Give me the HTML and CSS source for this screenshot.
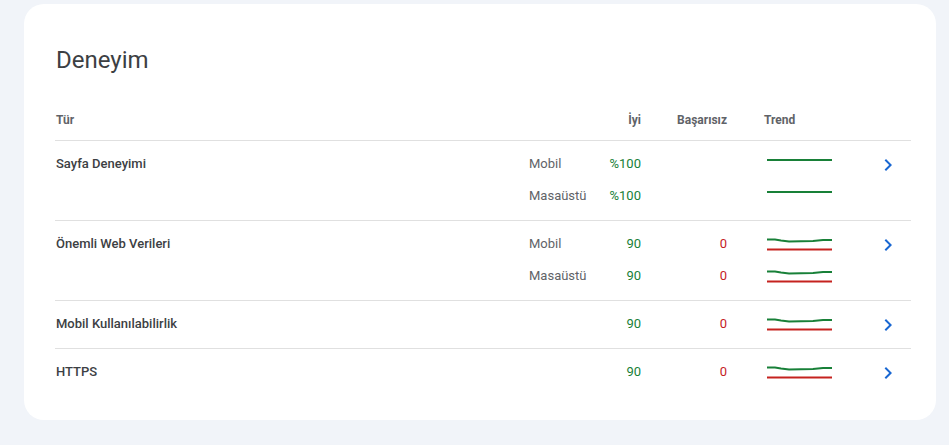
FILE: index.html
```html
<!DOCTYPE html>
<html lang="tr">
<head>
<meta charset="utf-8">
<link rel="stylesheet" href="styles.css">
</head>
<body>
<section class="card">
  <h1 class="title">Deneyim</h1>
  <div class="table">
    <div class="row head">
      <div class="c-name">Tür</div>
      <div class="c-label"></div>
      <div class="c-good">İyi</div>
      <div class="c-fail">Başarısız</div>
      <div class="c-trend">Trend</div>
      <div class="c-go"></div>
    </div>

    <div class="row">
      <div class="c-name r1">Sayfa Deneyimi</div>
      <div class="c-label r1">Mobil</div>
      <div class="c-good r1 green">%100</div>
      <div class="c-fail r1"></div>
      <div class="c-trend r1"><svg class="spark" viewBox="0 0 65 14"><path d="M0 2H65" class="g"/></svg></div>
      <div class="c-go r1"><svg class="chev" viewBox="0 0 24 24"><path d="M10 6L8.59 7.41 13.17 12l-4.58 4.59L10 18l6-6z"/></svg></div>
      <div class="c-label r2">Masaüstü</div>
      <div class="c-good r2 green">%100</div>
      <div class="c-fail r2"></div>
      <div class="c-trend r2"><svg class="spark" viewBox="0 0 65 14"><path d="M0 2H65" class="g"/></svg></div>
    </div>

    <div class="row">
      <div class="c-name r1">Önemli Web Verileri</div>
      <div class="c-label r1">Mobil</div>
      <div class="c-good r1 green">90</div>
      <div class="c-fail r1 red">0</div>
      <div class="c-trend r1"><svg class="spark" viewBox="0 0 65 14"><path d="M0 1.5L8 1.5 14 2.5 22 3.5 34 3.2 46 3 56 2 65 2" class="g"/><path d="M0 11.5H65" class="r"/></svg></div>
      <div class="c-go r1"><svg class="chev" viewBox="0 0 24 24"><path d="M10 6L8.59 7.41 13.17 12l-4.58 4.59L10 18l6-6z"/></svg></div>
      <div class="c-label r2">Masaüstü</div>
      <div class="c-good r2 green">90</div>
      <div class="c-fail r2 red">0</div>
      <div class="c-trend r2"><svg class="spark" viewBox="0 0 65 14"><path d="M0 1.5L8 1.5 14 2.5 22 3.5 34 3.2 46 3 56 2 65 2" class="g"/><path d="M0 11.5H65" class="r"/></svg></div>
    </div>

    <div class="row">
      <div class="c-name r1">Mobil Kullanılabilirlik</div>
      <div class="c-label r1"></div>
      <div class="c-good r1 green">90</div>
      <div class="c-fail r1 red">0</div>
      <div class="c-trend r1"><svg class="spark" viewBox="0 0 65 14"><path d="M0 1.5L8 1.5 14 2.5 22 3.5 34 3.2 46 3 56 2 65 2" class="g"/><path d="M0 11.5H65" class="r"/></svg></div>
      <div class="c-go r1"><svg class="chev" viewBox="0 0 24 24"><path d="M10 6L8.59 7.41 13.17 12l-4.58 4.59L10 18l6-6z"/></svg></div>
    </div>

    <div class="row last">
      <div class="c-name r1">HTTPS</div>
      <div class="c-label r1"></div>
      <div class="c-good r1 green">90</div>
      <div class="c-fail r1 red">0</div>
      <div class="c-trend r1"><svg class="spark" viewBox="0 0 65 14"><path d="M0 1.5L8 1.5 14 2.5 22 3.5 34 3.2 46 3 56 2 65 2" class="g"/><path d="M0 11.5H65" class="r"/></svg></div>
      <div class="c-go r1"><svg class="chev" viewBox="0 0 24 24"><path d="M10 6L8.59 7.41 13.17 12l-4.58 4.59L10 18l6-6z"/></svg></div>
    </div>
  </div>
</section>
</body>
</html>
```

FILE: styles.css
```css
html, body {
  margin: 0;
  padding: 0;
  background: #f1f4f9;
}
body {
  padding: 4px 13px 0 24px;
  font-family: Roboto, "Liberation Sans", Arial, sans-serif;
  color: #3c4043;
}
.card {
  background: #ffffff;
  border-radius: 20px;
  width: 912px;
  height: 416px;
  box-sizing: border-box;
  padding: 40px 25px 0 31px;
}
.title {
  margin: 0 0 24px 1px;
  font-family: Roboto, "Liberation Sans", Arial, sans-serif;
  font-weight: 400;
  font-size: 24px;
  line-height: 32px;
  color: #3c4043;
}
.table {
  width: 856px;
}
.row {
  display: grid;
  grid-template-columns: 474px 72px 40px 86px 137px 47px;
  grid-auto-rows: 32px;
  padding: 6px 0 9px 0;
  border-bottom: 1px solid #e0e0e0;
  font-size: 13px;
  align-items: center;
}
.row.last {
  border-bottom: none;
}
.row.head {
  grid-auto-rows: 40px;
  padding: 0;
  font-size: 12px;
  font-weight: 700;
  color: #5f6368;
}
.r1 { grid-row: 1; }
.r2 { grid-row: 2; }
.c-name {
  grid-column: 1;
  padding-left: 1px;
  font-weight: 500;
  color: #3c4043;
}
.row.head .c-name { font-weight: 700; color: #5f6368; }
.c-label {
  grid-column: 2;
  color: #5f6368;
}
.c-good {
  grid-column: 3;
  text-align: right;
}
.c-fail {
  grid-column: 4;
  text-align: right;
}
.c-trend {
  grid-column: 5;
  padding-left: 37px;
  display: flex;
  align-items: center;
}
.c-go {
  grid-column: 6;
  display: flex;
  justify-content: center;
  align-items: center;
}
.green { color: #188038; }
.red { color: #c5221f; }
.spark {
  width: 65px;
  height: 14px;
  margin: 4px 0 0 3px;
  display: block;
}
.spark path {
  fill: none;
  stroke-width: 2;
}
.spark .g { stroke: #188038; }
.spark .r { stroke: #c5221f; }
.chev {
  width: 24px;
  height: 24px;
  margin-top: 3px;
  fill: #1967d2;
  display: block;
}
```
